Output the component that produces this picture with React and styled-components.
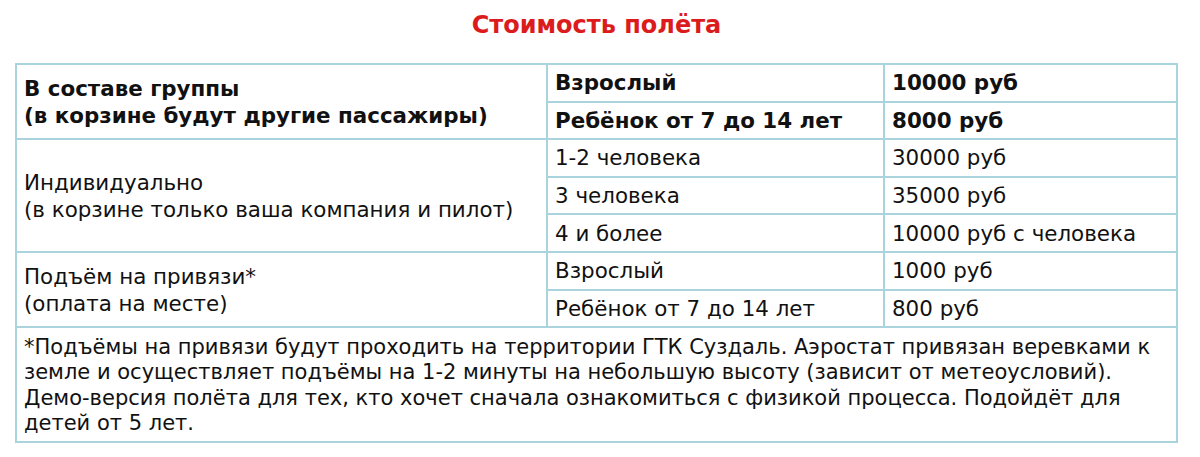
import React from "react";
import styled, { createGlobalStyle } from "styled-components";

const GlobalStyle = createGlobalStyle`
    body {
        margin: 0;
        background: #fff;
        font-family: "DejaVu Sans", Verdana, sans-serif;
        color: #111;
    }
`;

const Page = styled.div`
    padding: 11px 15px 0 15px;
    width: 1163px;
`;

const Title = styled.h2`
    margin: 0 0 24px 0;
    text-align: center;
    color: #dc1c1c;
    font-size: 24px;
    font-weight: bold;
    line-height: 28px;
`;

const Table = styled.table`
    width: 1161px;
    border-collapse: collapse;
    table-layout: fixed;
    font-size: 21.4px;
    border: 2px solid #a9d4de;
`;

const Cell = styled.td`
    border: 2px solid #a9d4de;
    padding: 0 7px;
    height: 35.6px;
    line-height: 27px;
    font-weight: ${(p) => (p.$bold ? "bold" : "normal")};
    vertical-align: middle;
    white-space: nowrap;
`;

const Note = styled.td`
    border: 2px solid #a9d4de;
    padding: 7px 7px 5px 7px;
    font-size: 21px;
    line-height: 25.3px;
    vertical-align: top;
    white-space: nowrap;
`;

const prices = [
    {
        label: ["Индивидуально", "(в корзине только ваша компания и пилот)"],
        rows: [
            ["1-2 человека", "30000 руб"],
            ["3 человека", "35000 руб"],
            ["4 и более", "10000 руб с человека"],
        ],
    },
    {
        label: ["Подъём на привязи*", "(оплата на месте)"],
        rows: [
            ["Взрослый", "1000 руб"],
            ["Ребёнок от 7 до 14 лет", "800 руб"],
        ],
    },
];

const noteLines = [
    "*Подъёмы на привязи будут проходить на территории ГТК Суздаль. Аэростат привязан веревками к",
    "земле и осуществляет подъёмы на 1-2 минуты на небольшую высоту (зависит от метеоусловий).",
    "Демо-версия полёта для тех, кто хочет сначала ознакомиться с физикой процесса. Подойдёт для",
    "детей от 5 лет.",
];

const App = () => {
    return (
        <Page>
            <GlobalStyle />
            <Title>Стоимость полёта</Title>
            <Table>
                <colgroup>
                    <col style={{ width: 531 }} />
                    <col style={{ width: 337 }} />
                    <col style={{ width: 293 }} />
                </colgroup>
                <tbody>
                    <tr>
                        <Cell $bold rowSpan={2}>
                            В составе группы
                            <br />
                            (в корзине будут другие пассажиры)
                        </Cell>
                        <Cell $bold>Взрослый</Cell>
                        <Cell $bold>10000 руб</Cell>
                    </tr>
                    <tr>
                        <Cell $bold>Ребёнок от 7 до 14 лет</Cell>
                        <Cell $bold>8000 руб</Cell>
                    </tr>
                    {prices.map((group) =>
                        group.rows.map((row, i) => (
                            <tr key={group.label[0] + i}>
                                {i === 0 && (
                                    <Cell rowSpan={group.rows.length}>
                                        {group.label[0]}
                                        <br />
                                        {group.label[1]}
                                    </Cell>
                                )}
                                <Cell>{row[0]}</Cell>
                                <Cell>{row[1]}</Cell>
                            </tr>
                        ))
                    )}
                    <tr>
                        <Note colSpan={3}>
                            {noteLines.map((line, i) => (
                                <React.Fragment key={i}>
                                    {line}
                                    {i < noteLines.length - 1 && <br />}
                                </React.Fragment>
                            ))}
                        </Note>
                    </tr>
                </tbody>
            </Table>
        </Page>
    );
};

export default App;
